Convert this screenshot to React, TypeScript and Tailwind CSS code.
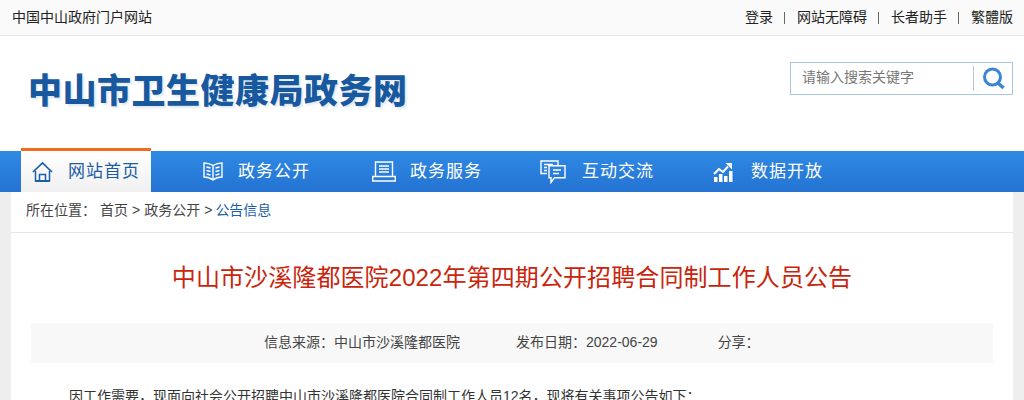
import React from 'react';

const HomeIcon = () => (
  <svg className="w-[22px] h-[22px] text-[#1b5da6]" viewBox="0 0 22 22" fill="none" stroke="currentColor" strokeWidth="1.7">
    <path d="M1 11 10.500 2 20 11" />
    <path d="M3.500 10v10h14V10" strokeWidth="1.500" />
    <path d="M7.500 20v-6.500h6V20" strokeWidth="1.500" />
    <path d="M3.500 20h14" strokeWidth="2" />
  </svg>
);

const BookIcon = () => (
  <svg className="w-[20px] h-[20px]" viewBox="0 0 20 20" fill="none" stroke="white" strokeWidth="1.400">
    <path d="M10 3.500C7.500 2 4 1 1 1v14c3 0 6.500 1 9 3 2.500-2 6-3 9-3V1c-3 0-6.500 1-9 2.500z" />
    <path d="M10 3.500V18" />
    <path d="M3.500 5l4 1M3.500 8.500l4 1M3.500 12l4 1M16.500 5l-4 1M16.500 8.500l-4 1M16.500 12l-4 1" />
  </svg>
);

const ScreenIcon = () => (
  <svg className="w-[24px] h-[21px]" viewBox="0 0 24 21" fill="none" stroke="white" strokeWidth="1.400">
    <path d="M3.500 15V1h17v14" />
    <path d="M7 5h10M7 8h10M7 11h10" />
    <path d="M.7 15.500h22.600v4.500H.7z" />
  </svg>
);

const ChatIcon = () => (
  <svg className="w-[26px] h-[24px]" viewBox="0 0 26 24" fill="none" stroke="white" strokeWidth="1.400">
    <path d="M7 13.500H1V1h17v4" />
    <path d="M4 4.500h9M4 7.500h3M4 10.500h3" />
    <path d="M9 5.700h16v12H14.500L11 22.500v-4.800H9z" />
    <path d="M13 10h8M13 13.500h6" />
  </svg>
);

const ChartIcon = () => (
  <svg className="w-[20px] h-[20px]" viewBox="0 0 20 20" fill="white">
    <rect x="1" y="15" width="3.500" height="5" />
    <rect x="6" y="12" width="3.500" height="8" />
    <rect x="11" y="14" width="3.500" height="6" />
    <rect x="16" y="9" width="3.500" height="11" />
    <path d="M1 12l5-5 4 3 5-5.500" fill="none" stroke="white" strokeWidth="2" />
    <path d="M12.500 1H19v6.500z" />
  </svg>
);

const SearchIcon = () => (
  <svg className="w-[23px] h-[23px]" viewBox="0 0 23 23" fill="none" stroke="#3a86d6">
    <circle cx="10.500" cy="10" r="8" strokeWidth="3" />
    <path d="M16 16l5.500 5" strokeWidth="3.500" />
  </svg>
);

const navItems = [
  { label: '政务公开', icon: <BookIcon />, className: 'ml-[52px] gap-[15px]' },
  { label: '政务服务', icon: <ScreenIcon />, className: 'ml-[62px] gap-[14px]' },
  { label: '互动交流', icon: <ChatIcon />, className: 'ml-[58px] gap-[16px]' },
  { label: '数据开放', icon: <ChartIcon />, className: 'ml-[59px] gap-[18px]' },
];

const Sep = () => <span className="ml-[11px] mr-[12px] w-px h-[12px] bg-[#666]" />;

export default function App() {
  return (
    <div className="h-[400px] overflow-hidden bg-white text-[#333] font-['Liberation_Sans','Noto_Sans_CJK_SC',sans-serif]">
      <div className="h-[36px] bg-[#fafafa] border-b border-[#e5e5e5] flex items-center justify-between pl-[12px] pr-[11px] text-[14px] text-[#222]">
        <span>中国中山政府门户网站</span>
        <div className="flex items-center">
          <span>登录</span>
          <Sep />
          <span>网站无障碍</span>
          <Sep />
          <span>长者助手</span>
          <Sep />
          <span>繁體版</span>
        </div>
      </div>

      <div className="h-[115px] flex items-start justify-between pl-[28px] pr-[11px]">
        <h1 className="mt-[31px] text-[34px] leading-[48px] tracking-[0.5px] font-black text-[#17589f] [text-shadow:2px_2px_2px_#e3e9f1] whitespace-nowrap">
          中山市卫生健康局政务网
        </h1>
        <div className="mt-[26px] w-[223px] h-[33px] border border-[#aac6e2] flex items-center">
          <span className="pl-[11px] pb-[2px] text-[14px] text-[#777] flex-1">请输入搜索关键字</span>
          <div className="h-[25px] border-l border-[#aac6e2] w-[39px] flex items-center justify-center">
            <SearchIcon />
          </div>
        </div>
      </div>

      <nav className="h-[41px] bg-gradient-to-b from-[#2f8ae4] to-[#2573d2] flex text-white text-[17px] tracking-[1px]">
        <div className="relative ml-[21px] w-[130px] h-[41px] bg-gradient-to-b from-white to-[#f0f0f0] flex items-center pl-[11px] gap-[14px] text-[#1b5da6]">
          <div className="absolute left-0 right-0 -top-[3px] h-[3px] bg-[#f26b1d]" />
          <HomeIcon />
          <span>网站首页</span>
        </div>
        {navItems.map((item) => (
          <div key={item.label} className={`flex items-center ${item.className}`}>
            {item.icon}
            <span>{item.label}</span>
          </div>
        ))}
      </nav>

      <div className="bg-[#eeeeee] px-[11px]">
        <div className="bg-white h-[208px]">
          <div className="h-[41px] border-b border-[#e5e5e5] flex items-center pl-[15px] pb-[3px] text-[14px] text-[#444]">
            <span className="mr-[4px]">所在位置：</span>
            <span>首页</span>
            <span className="mx-[4px]">&gt;</span>
            <span>政务公开</span>
            <span className="ml-[4px] mr-[3px]">&gt;</span>
            <span className="text-[#1b5da6]">公告信息</span>
          </div>
          <h2 className="mt-[27px] text-center text-[24px] leading-[36px] tracking-[0.1px] text-[#c8250c]">
            中山市沙溪隆都医院2022年第四期公开招聘合同制工作人员公告
          </h2>
          <div className="mt-[27px] mx-[20px] h-[40px] bg-[#f8f8f8] flex items-center pb-[2px] text-[14px] text-[#444] pl-[233px]">
            <span className="mr-[56px]">信息来源：中山市沙溪隆都医院</span>
            <span className="mr-[60px]">发布日期：2022-06-29</span>
            <span>分享：</span>
          </div>
          <p className="mt-[23px] pl-[58px] text-[14px] leading-[20px] text-[#333] whitespace-nowrap">
            因工作需要，现面向社会公开招聘中山市沙溪隆都医院合同制工作人员12名，现将有关事项公告如下：
          </p>
        </div>
      </div>
    </div>
  );
}
